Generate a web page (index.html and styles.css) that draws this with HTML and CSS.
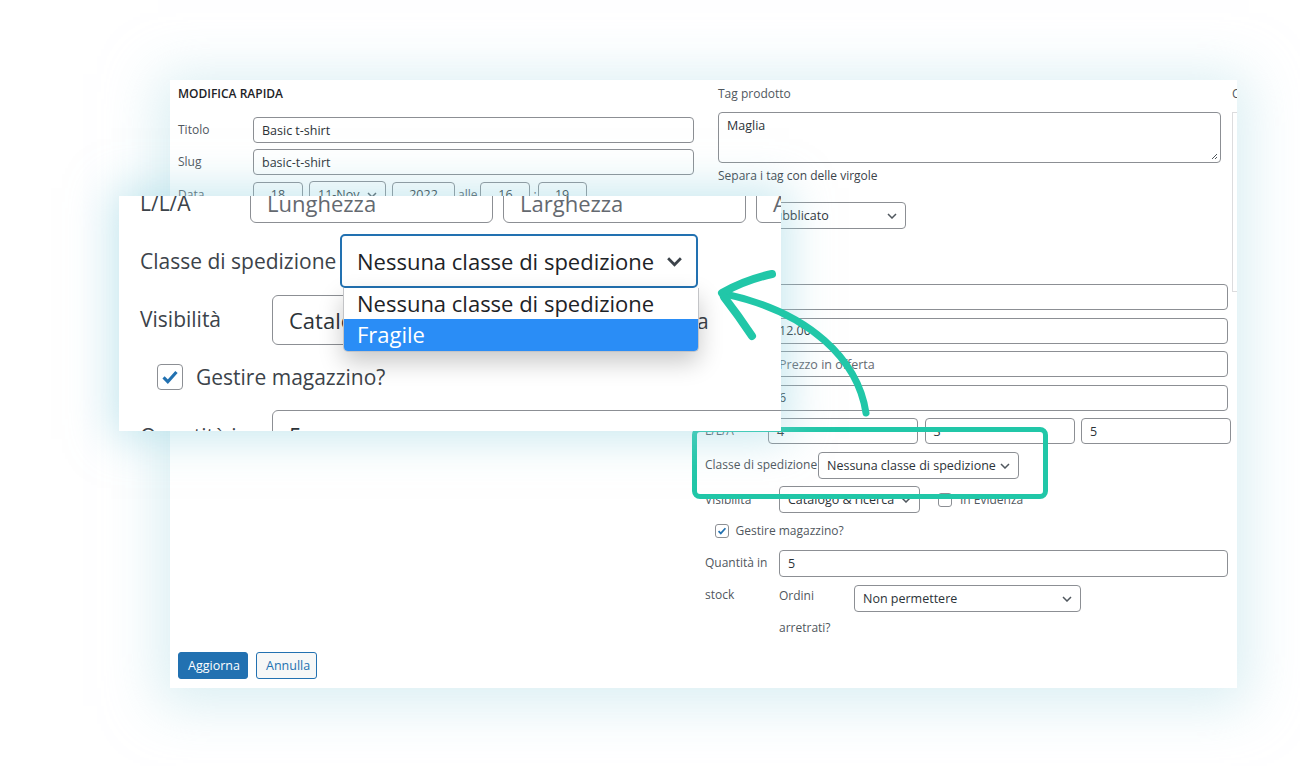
FILE: index.html
```html
<!DOCTYPE html>
<html lang="it">
<head>
    <meta charset="UTF-8">
    <title>Modifica rapida - Classe di spedizione</title>
    <link rel="stylesheet" href="styles.css">
</head>
<body>
<div class="stage">
    <div class="card">
        <div class="card-cols">
            <div class="col-main">
                <h2 class="edit-title">MODIFICA RAPIDA</h2>
                <div class="row">
                    <span class="lbl w75">Titolo</span>
                    <div class="field grow">Basic t-shirt</div>
                </div>
                <div class="row">
                    <span class="lbl w75">Slug</span>
                    <div class="field grow">basic-t-shirt</div>
                </div>
                <div class="row">
                    <span class="lbl w75">Data</span>
                    <div class="field center w50">18</div>
                    <div class="select w77">11-Nov <svg class="chev" viewBox="0 0 10 6"><path d="M1 1l4 4 4-4"/></svg></div>
                    <div class="field center w63">2022</div>
                    <span class="lbl tight">alle</span>
                    <div class="field center w50">16</div>
                    <span class="lbl colon">:</span>
                    <div class="field center w49">19</div>
                </div>
            </div>

            <div class="col-side">
                <div class="tags">
                    <div class="lbl">Tag prodotto</div>
                    <div class="textarea">Maglia
                        <svg class="grip" viewBox="0 0 8 8"><path d="M7 2L2 7M7 5L5 7"/></svg>
                    </div>
                    <div class="hint">Separa i tag con delle virgole</div>
                    <div class="row status-row">
                        <span class="lbl w40">Stato</span>
                        <div class="select w148">Pubblicato <svg class="chev" viewBox="0 0 10 6"><path d="M1 1l4 4 4-4"/></svg></div>
                    </div>
                </div>

                <div class="wc-fields">
                    <div class="row">
                        <span class="lbl w65">COD</span>
                        <div class="field grow"></div>
                    </div>
                    <div class="row">
                        <span class="lbl w65">Prezzo</span>
                        <div class="field grow">12.00</div>
                    </div>
                    <div class="row">
                        <span class="lbl w65">In offerta</span>
                        <div class="field grow placeholder">Prezzo in offerta</div>
                    </div>
                    <div class="row">
                        <span class="lbl w65">Peso</span>
                        <div class="field grow">6</div>
                    </div>
                    <div class="row">
                        <span class="lbl w63">L/L/A</span>
                        <div class="field w150">4</div>
                        <div class="field w150">3</div>
                        <div class="field w150">5</div>
                    </div>
                    <div class="row">
                        <span class="lbl w113">Classe di spedizione</span>
                        <div class="select w201">Nessuna classe di spedizione <svg class="chev" viewBox="0 0 10 6"><path d="M1 1l4 4 4-4"/></svg></div>
                    </div>
                    <div class="row">
                        <span class="lbl w74">Visibilità</span>
                        <div class="select w141">Catalogo &amp; ricerca <svg class="chev" viewBox="0 0 10 6"><path d="M1 1l4 4 4-4"/></svg></div>
                        <span class="checkbox feature"></span>
                        <span class="lbl">In Evidenza</span>
                    </div>
                    <div class="row stock-check">
                        <span class="checkbox checked"><svg viewBox="0 0 14 14"><path d="M3 7.2l2.6 2.6L11 3.8"/></svg></span>
                        <span class="lbl">Gestire magazzino?</span>
                    </div>
                    <div class="row stock-row">
                        <span class="lbl w74 wrap">Quantità in stock</span>
                        <div class="stock-right">
                            <div class="field">5</div>
                            <div class="backorders">
                                <span class="lbl wrap w75">Ordini arretrati?</span>
                                <div class="select w227">Non permettere <svg class="chev" viewBox="0 0 10 6"><path d="M1 1l4 4 4-4"/></svg></div>
                            </div>
                        </div>
                    </div>
                </div>
            </div>

            <div class="col-cat">
                <div class="lbl">Categorie prodotto</div>
                <div class="cat-box"></div>
            </div>
        </div>

        <div class="actions">
            <button class="btn primary">Aggiorna</button>
            <button class="btn secondary">Annulla</button>
        </div>
    </div>

    <div class="focus-box"></div>

    <div class="zoom-panel">
        <div class="zoom-inner">
            <div class="zrow first">
                <span class="zlbl zw110">L/L/A</span>
                <div class="zfield placeholder">Lunghezza</div>
                <div class="zfield placeholder">Larghezza</div>
                <div class="zfield placeholder">Altezza</div>
            </div>
            <div class="zrow">
                <span class="zlbl zw200">Classe di spedizione</span>
                <div class="zselect">Nessuna classe di spedizione
                    <svg class="zchev" viewBox="0 0 16 10"><path d="M2 2l6 6 6-6"/></svg>
                </div>
            </div>
            <div class="zrow">
                <span class="zlbl zw132 zvis-lbl">Visibilità</span>
                <div class="zfield zvis">Catalogo &amp; ricerca</div>
                <span class="zcheckbox zfeature"></span>
                <span class="zlbl">In Evidenza</span>
            </div>
            <div class="zrow zcheck-row">
                <span class="zcheckbox"><svg viewBox="0 0 26 26"><path d="M6 13.5l4.6 4.6L20 7.5"/></svg></span>
                <span class="zlbl">Gestire magazzino?</span>
            </div>
            <div class="zrow zqty-row">
                <span class="zlbl zw132">Quantità in</span>
                <div class="zfield zqty">5</div>
            </div>
        </div>

        <ul class="dropdown">
            <li>Nessuna classe di spedizione</li>
            <li class="active">Fragile</li>
        </ul>
    </div>

    <svg class="arrow" viewBox="0 0 180 175">
        <path class="shaft" d="M166 163 C158 110 110 62 25 44"/>
        <path class="head" d="M22 43 Q45 30 72 24"/>
        <path class="head" d="M24 47 Q38 65 52 86"/>
    </svg>
</div>
</body>
</html>
```

FILE: styles.css
```css
body {
    margin: 0;
    background: #ffffff;
    font-family: "Open Sans", "Noto Sans", sans-serif;
    color: #2c3338;
    overflow: hidden;
}
.stage {
    position: relative;
    width: 1300px;
    height: 766px;
    padding: 80px 0 0 170px;
    box-sizing: border-box;
}
.card {
    width: 1067px;
    height: 608px;
    box-sizing: border-box;
    padding: 6px 0 9px 8px;
    background: #ffffff;
    display: flex;
    flex-direction: column;
    overflow: hidden;
    box-shadow: 0 6px 50px 12px rgba(190, 226, 234, 0.55);
}
.card-cols {
    display: flex;
    flex: 1;
}
.col-main {
    width: 516px;
    flex-shrink: 0;
}
.col-side {
    width: 525px;
    margin-left: 11px;
    flex-shrink: 0;
}
.col-cat {
    width: 200px;
    margin-left: 2px;
    flex-shrink: 0;
}

/* small form pieces */
.edit-title {
    margin: 0 0 15px;
    font-size: 12px;
    line-height: 16px;
    font-weight: 600;
    color: #1d2327;
}
.lbl {
    font-size: 12px;
    line-height: 16px;
    color: #50575e;
    flex-shrink: 0;
    white-space: nowrap;
}
.lbl.wrap { white-space: normal; }
.row {
    display: flex;
    align-items: center;
    gap: 6px;
    margin-bottom: 6px;
}
.row > .lbl[class*="w"] { margin-right: -6px; }
.lbl.tight { margin: 0 -3px 0 -3px; }
.lbl.colon { margin: 0 -5px 0 -3px; }
.w40 { width: 40px; }
.w49 { width: 49px; }
.w50 { width: 50px; }
.w63 { width: 63px; }
.w65 { width: 65px; }
.w74 { width: 74px; }
.w75 { width: 75px; }
.w77 { width: 77px; }
.w113 { width: 113px; }
.w141 { width: 141px; }
.w148 { width: 148px; }
.w150 { width: 150px; }
.w201 { width: 201px; }
.w227 { width: 227px; }
.grow { flex: 1; }

.field, .select {
    height: 26px;
    box-sizing: border-box;
    border: 1px solid #8c8f94;
    border-radius: 4px;
    padding: 0 8px;
    font-size: 12.5px;
    color: #2c3338;
    display: flex;
    align-items: center;
    background: #ffffff;
    flex-shrink: 0;
    white-space: nowrap;
    overflow: hidden;
}
.field.grow { flex-shrink: 1; }
.field.center { justify-content: center; }
.placeholder { color: #646970; }
.select {
    position: relative;
    padding-right: 22px;
    height: 27px;
}
.chev {
    position: absolute;
    right: 8px;
    top: 10px;
    width: 10px;
    height: 6px;
    fill: none;
    stroke: #50575e;
    stroke-width: 1.5;
}

.tags { padding-left: 13px; }
.tags > .lbl { display: block; }
.textarea {
    position: relative;
    width: 503px;
    height: 51px;
    margin-top: 10px;
    box-sizing: border-box;
    border: 1px solid #8c8f94;
    border-radius: 4px;
    padding: 4px 8px;
    font-size: 12.5px;
}
.grip {
    position: absolute;
    right: 2px;
    bottom: 2px;
    width: 8px;
    height: 8px;
    fill: none;
    stroke: #50575e;
    stroke-width: 1;
}
.hint {
    margin-top: 5px;
    font-size: 12px;
    line-height: 16px;
    color: #3c434a;
}
.status-row { margin-top: 18px; }

.wc-fields { margin-top: 55px; }
.wc-fields .row { margin-bottom: 7.5px; gap: 6.5px; }
.wc-fields .row > .lbl[class*="w"] { margin-right: -6.5px; }
.wc-fields .field { height: 26px; }
.wc-fields .field.grow { margin-right: 2px; }
.wc-fields .select { height: 27px; }

.checkbox {
    width: 14px;
    height: 14px;
    box-sizing: border-box;
    border: 1px solid #8c8f94;
    border-radius: 3px;
    display: inline-flex;
    flex-shrink: 0;
    background: #ffffff;
}
.checkbox svg {
    width: 12px;
    height: 12px;
    fill: none;
    stroke: #2271b1;
    stroke-width: 2;
}
.checkbox.feature { margin-left: 11px; margin-right: 2px; }
.stock-check { padding-left: 10px; margin-top: 10px; gap: 8px; }
.stock-row { align-items: flex-start; margin-top: 11px; }
.stock-row > .lbl {
    line-height: 32px;
    margin-top: -3px;
}
.stock-right {
    flex: 1;
    margin-left: 0;
    margin-right: 2px;
}
.stock-right > .field { height: 27px; }
.backorders {
    display: flex;
    align-items: flex-start;
    margin-top: 8px;
}
.backorders .lbl {
    line-height: 32px;
    margin-top: -5px;
}

.cat-box {
    height: 178px;
    margin-top: 10px;
    border: 1px solid #dcdcde;
}
.col-cat > .lbl { display: block; }

.actions {
    display: flex;
    gap: 8px;
    margin-top: auto;
}
.btn {
    height: 27px;
    padding: 0 9px;
    border-radius: 3px;
    font-family: inherit;
    font-size: 12.5px;
    cursor: pointer;
}
.btn.primary {
    width: 70px;
    background: #2271b1;
    border: 1px solid #2271b1;
    color: #ffffff;
}
.btn.secondary {
    width: 61px;
    background: #f6f7f7;
    border: 1px solid #2271b1;
    color: #2271b1;
}

/* highlight + magnified panel */
.focus-box {
    position: absolute;
    left: 692px;
    top: 427px;
    width: 356px;
    height: 72px;
    box-sizing: border-box;
    border: 5px solid #21c7a8;
    border-radius: 8px;
}
.zoom-panel {
    position: absolute;
    left: 119px;
    top: 196px;
    width: 662px;
    height: 235px;
    background: #ffffff;
    overflow: hidden;
    box-shadow: 0 0 40px 8px rgba(150, 212, 226, 0.5);
}
.zoom-inner {
    padding-left: 21px;
    margin-top: -14px;
}
.zrow {
    display: flex;
    align-items: center;
    margin-bottom: 8px;
}
.zrow.first { margin-bottom: 11px; }
.zlbl {
    font-size: 21px;
    color: #3c434a;
    white-space: nowrap;
    flex-shrink: 0;
}
.zw110 { width: 110px; }
.zw132 { width: 132px; }
.zw200 { width: 200px; }
.zfield {
    width: 243px;
    height: 41px;
    box-sizing: border-box;
    margin-right: 10px;
    border: 1px solid #8c8f94;
    border-radius: 6px;
    padding: 0 16px;
    font-size: 22px;
    display: flex;
    align-items: center;
    flex-shrink: 0;
    overflow: hidden;
}
.zselect {
    position: relative;
    width: 358px;
    height: 54px;
    box-sizing: border-box;
    border: 2px solid #2271b1;
    border-radius: 5px;
    padding-left: 15px;
    font-size: 22px;
    color: #1d2327;
    display: flex;
    align-items: center;
    flex-shrink: 0;
}
.zchev {
    position: absolute;
    right: 13px;
    top: 20px;
    width: 17px;
    height: 11px;
    fill: none;
    stroke: #3c434a;
    stroke-width: 2.6;
}
.zvis-lbl { margin-top: -4px; }
.zvis {
    width: 252px;
    height: 50px;
    margin-top: -1px;
    margin-right: 36px;
}
.zfeature { margin-right: 12px; }
.zcheck-row { margin-top: 18px; margin-left: 17px; gap: 13px; }
.zcheckbox {
    width: 26px;
    height: 26px;
    box-sizing: border-box;
    border: 1px solid #8c8f94;
    border-radius: 4px;
    display: inline-flex;
    flex-shrink: 0;
}
.zcheckbox svg {
    width: 24px;
    height: 24px;
    fill: none;
    stroke: #2271b1;
    stroke-width: 3.4;
}
.zqty-row { margin-top: 21px; }
.zqty {
    width: 520px;
    height: 50px;
    margin-top: -2px;
}
.dropdown {
    position: absolute;
    left: 224px;
    top: 92px;
    width: 354px;
    margin: 0;
    padding: 0;
    list-style: none;
    background: #ffffff;
    border: 1px solid #c3c4c7;
    border-top: none;
    border-radius: 0 0 5px 5px;
    overflow: hidden;
    box-shadow: 0 10px 24px rgba(0, 0, 0, 0.22);
    font-size: 22px;
}
.dropdown li {
    height: 31px;
    line-height: 31px;
    padding-left: 13px;
    color: #1d2327;
}
.dropdown li.active {
    height: 32px;
    background: #2a8df6;
    color: #ffffff;
}

.arrow {
    position: absolute;
    left: 700px;
    top: 250px;
    width: 180px;
    height: 175px;
    overflow: visible;
}
.arrow path {
    fill: none;
    stroke: #21c7a8;
    stroke-linecap: round;
}
.arrow .shaft { stroke-width: 7; }
.arrow .head { stroke-width: 8; }
```
